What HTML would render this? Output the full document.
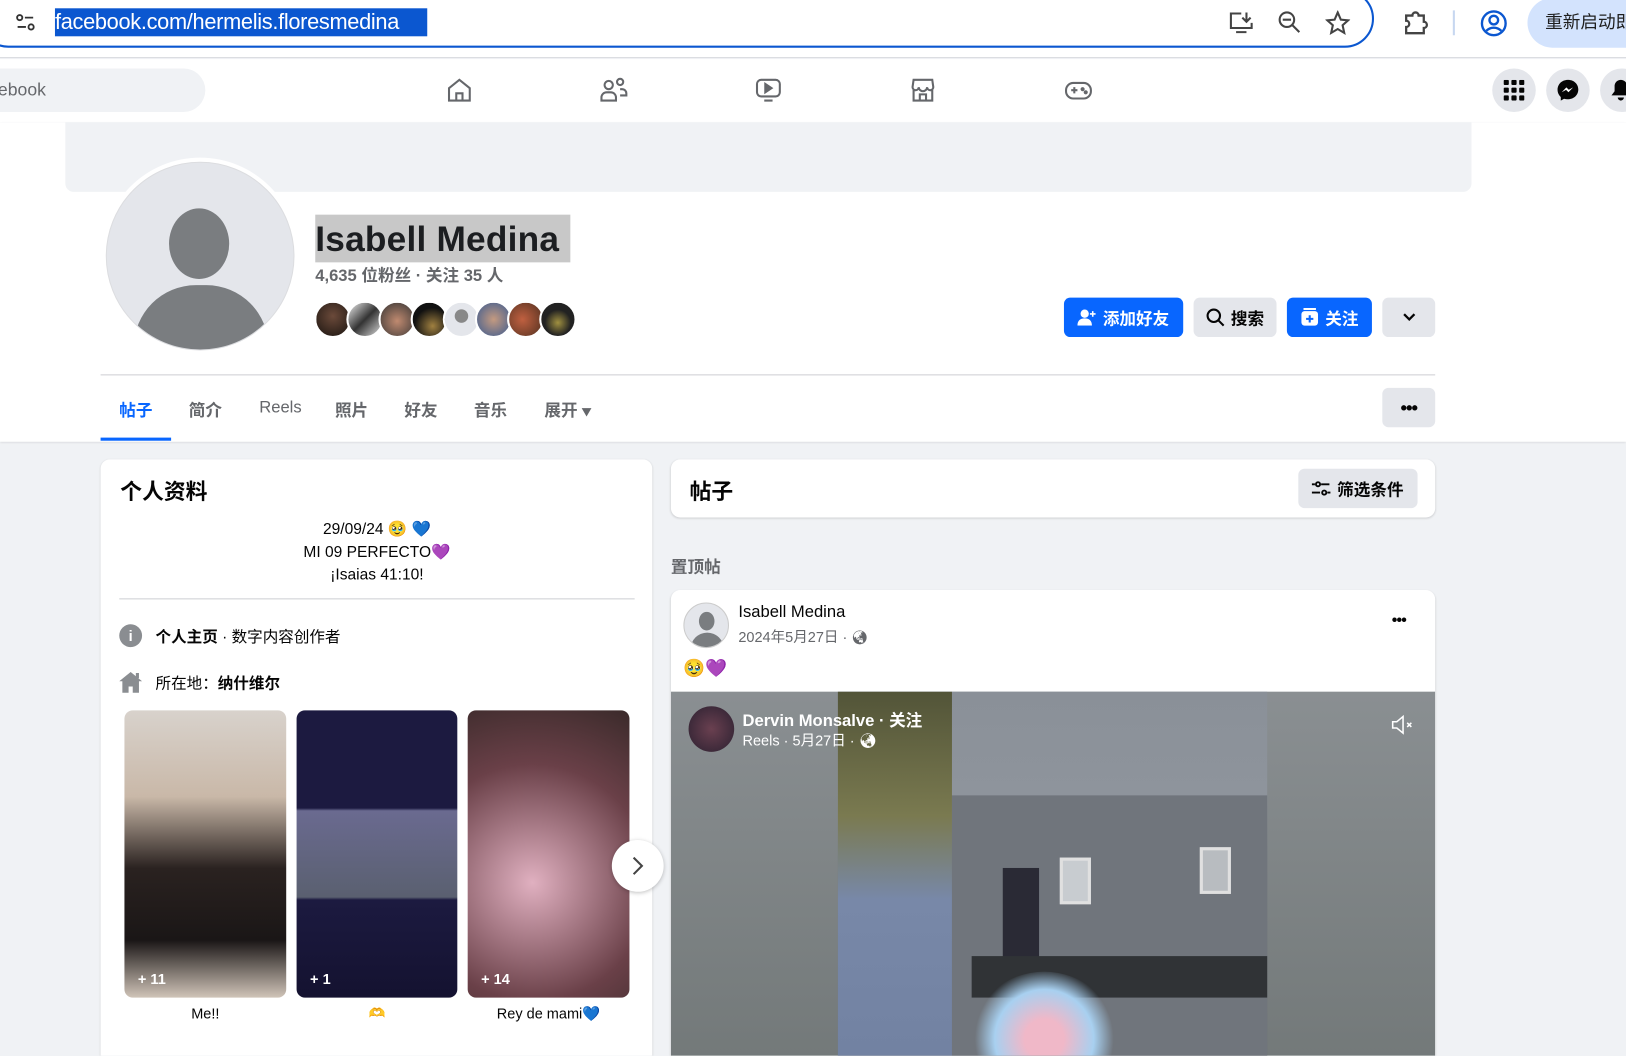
<!DOCTYPE html>
<html><head><meta charset="utf-8"><style>
*{box-sizing:border-box;margin:0;padding:0}
html,body{width:1626px;height:1056px;overflow:hidden;background:#f0f2f5}
body{font-family:"Liberation Sans","Noto Sans CJK SC",sans-serif;color:#050505}
#w{position:absolute;left:0;top:0;width:1568px;height:1018px;transform:scale(1.03699);transform-origin:0 0;overflow:hidden;background:#f0f2f5}
.a{position:absolute}
.c{border-radius:50%}
.btn{position:absolute;border-radius:6px;font-weight:bold;font-size:16px;display:flex;align-items:center;justify-content:center;gap:6px}
.tab{position:absolute;top:384px;height:20px;line-height:20px;font-size:16px;font-weight:bold;color:#65676b;font-family:"Noto Sans CJK SC","Liberation Sans",sans-serif}
.card{position:absolute;background:#fff;border-radius:9px;box-shadow:0 1px 2px rgba(0,0,0,.15)}
</style></head><body><div id="w">
<div class="a" style="left:0;top:0;width:1568px;height:56px;background:#fff;border-bottom:1px solid #dadce0"></div>
<div class="a" style="left:-20px;top:-10px;width:1345px;height:56px;border:2.5px solid #0b57d0;border-radius:28px;background:#fff"></div>
<svg class="a" style="left:14px;top:12px" width="22" height="20" viewBox="0 0 22 20" fill="none" stroke="#333" stroke-width="1.8"><circle cx="5" cy="5" r="2.5"/><path d="M10 5h8M3 14h8"/><circle cx="16" cy="14" r="2.5"/></svg>
<div class="a" style="left:53px;top:8px;width:359px;height:27px;background:#0b57d0;color:#fff;font-size:21px;line-height:27px;letter-spacing:-0.3px">facebook.com/hermelis.floresmedina</div>
<svg class="a" style="left:1185px;top:10px" width="26" height="24" viewBox="0 0 26 24" fill="none" stroke="#444" stroke-width="2"><path d="M12 3H2v14h20v-5M7 21h10M17 2v9M13 7l4 4 4-4"/></svg>
<svg class="a" style="left:1232px;top:10px" width="24" height="24" viewBox="0 0 24 24" fill="none" stroke="#444" stroke-width="2"><circle cx="9" cy="9" r="7"/><path d="M5 9h8M14 14l7 7"/></svg>
<svg class="a" style="left:1278px;top:10px" width="24" height="24" viewBox="0 0 24 24" fill="none" stroke="#444" stroke-width="2"><path d="M12 2l3 7 7 .6-5.3 4.7 1.6 7.4L12 18l-6.3 3.7 1.6-7.4L2 9.6 9 9z"/></svg>
<svg class="a" style="left:1352px;top:9px" width="26" height="26" viewBox="0 0 26 26" fill="none" stroke="#444" stroke-width="2.2"><path d="M4 6h6a3 3 0 016 0h5v6a3 3 0 010 6v5H4v-6a3 3 0 000-6z"/></svg>
<div class="a" style="left:1401px;top:10px;width:2px;height:24px;background:#c7d7f0"></div>
<svg class="a" style="left:1427px;top:9px" width="27" height="27" viewBox="0 0 26 26" fill="none" stroke="#0b57d0" stroke-width="2.2"><circle cx="13" cy="13" r="11"/><circle cx="13" cy="10" r="4"/><path d="M6 20c4-4 10-4 14 0"/></svg>
<div class="a" style="left:1473px;top:-2px;width:140px;height:48px;background:#d3e3fd;border-radius:24px;font-size:17px;line-height:48px;padding-left:17px;color:#1f1f1f">重新启动即</div>
<div class="a" style="left:0;top:57px;width:1568px;height:61px;background:#fff;box-shadow:0 2px 3px rgba(0,0,0,.08)"></div>
<div class="a" style="left:-40px;top:66px;width:238px;height:42px;background:#f0f2f5;border-radius:21px;font-size:17px;line-height:42px;padding-left:38px;color:#65676b">ebook</div>
<svg class="a" style="left:430px;top:74px" width="26" height="26" viewBox="0 0 26 26" fill="none" stroke="#65676b" stroke-width="2"><path d="M3 11L13 3l10 8v12H3zM10 23v-7h6v7"/></svg>
<svg class="a" style="left:578px;top:74px" width="28" height="26" viewBox="0 0 28 26" fill="none" stroke="#65676b" stroke-width="2"><circle cx="9" cy="8" r="4"/><path d="M2 23v-3a5 5 0 015-5h4a5 5 0 015 5v3z"/><circle cx="20" cy="5" r="3"/><path d="M20 12h2a4 4 0 014 4v2h-6"/></svg>
<svg class="a" style="left:728px;top:74px" width="26" height="26" viewBox="0 0 26 26" fill="none" stroke="#65676b" stroke-width="2"><rect x="2" y="3" width="22" height="16" rx="4"/><path d="M10 7v8l6-4z" fill="#65676b"/><path d="M9 23h8"/></svg>
<svg class="a" style="left:877px;top:74px" width="26" height="26" viewBox="0 0 26 26" fill="none" stroke="#65676b" stroke-width="2"><path d="M4 3h18l1 7a3 3 0 01-6 0 3 3 0 01-8 0 3 3 0 01-6 0zM4 12v11h18V12M10 23v-6h6v6"/></svg>
<svg class="a" style="left:1026px;top:76px" width="28" height="24" viewBox="0 0 28 24" fill="none" stroke="#65676b" stroke-width="2"><rect x="2" y="4" width="24" height="15" rx="7"/><path d="M7 11h6M10 8v6"/><circle cx="18" cy="10" r="1" fill="#65676b"/><circle cx="21" cy="13" r="1" fill="#65676b"/></svg>
<div class="a c" style="left:1439px;top:66px;width:42px;height:42px;background:#e4e6eb"></div>
<svg class="a" style="left:1450px;top:77px" width="20" height="20" viewBox="0 0 20 20" fill="#050505"><rect x="0" y="0" width="5" height="5" rx="1"/><rect x="7.5" y="0" width="5" height="5" rx="1"/><rect x="15" y="0" width="5" height="5" rx="1"/><rect x="0" y="7.5" width="5" height="5" rx="1"/><rect x="7.5" y="7.5" width="5" height="5" rx="1"/><rect x="15" y="7.5" width="5" height="5" rx="1"/><rect x="0" y="15" width="5" height="5" rx="1"/><rect x="7.5" y="15" width="5" height="5" rx="1"/><rect x="15" y="15" width="5" height="5" rx="1"/></svg>
<div class="a c" style="left:1491px;top:66px;width:42px;height:42px;background:#e4e6eb"></div>
<svg class="a" style="left:1501px;top:76px" width="22" height="22" viewBox="0 0 22 22"><path d="M11 1C5 1 1 5.3 1 10.6c0 2.8 1.2 5.2 3.1 6.9V21l3.2-1.8c1.1.3 2.4.5 3.7.5 6 0 10-4.3 10-9.4S17 1 11 1z" fill="#050505"/><path d="M5 13l4.5-4.8 2.3 2.3 4.2-2.3-4.5 4.8-2.3-2.3z" fill="#fff"/></svg>
<div class="a c" style="left:1543px;top:66px;width:42px;height:42px;background:#e4e6eb"></div>
<svg class="a" style="left:1553px;top:76px" width="20" height="22" viewBox="0 0 20 22" fill="#050505"><path d="M10 1a6 6 0 016 6v5l3 4H1l3-4V7a6 6 0 016-6zM7 18h6a3 3 0 01-6 0z"/></svg>
<div class="a" style="left:0;top:118px;width:1568px;height:308px;background:#fff;box-shadow:0 1px 2px rgba(0,0,0,.1)"></div>
<div class="a" style="left:63px;top:118px;width:1356px;height:67px;background:#f0f2f5;border-radius:0 0 8px 8px"></div>
<div class="a c" style="left:98px;top:152px;width:190px;height:190px;background:#fff"></div>
<div class="a c" style="left:102px;top:156px;width:182px;height:182px;background:#e4e6eb;overflow:hidden;border:1px solid #dcdde0">
 <div class="a" style="left:60px;top:44px;width:58px;height:68px;border-radius:50%;background:#7a7d80"></div>
 <div class="a" style="left:26px;top:118px;width:130px;height:100px;border-radius:60px 60px 0 0;background:#7a7d80"></div>
</div>
<div class="a" style="left:304px;top:207px;width:246px;height:46px;background:#c8c8c8"></div>
<div class="a" style="left:304px;top:212px;font-size:34px;font-weight:bold;color:#1c1e21;letter-spacing:0.2px">Isabell Medina</div>
<div class="a" style="left:304px;top:256px;font-size:16px;line-height:22px;font-weight:bold;color:#65676b">4,635 位粉丝 · 关注 35 人</div>
<div class="a" style="left:303px;top:290px;height:36px;width:260px">
 <div class="a c" style="left:0;top:0;width:36px;height:36px;background:radial-gradient(circle at 50% 40%,#6b4a3a,#1a1410);border:2px solid #fff"></div>
 <div class="a c" style="left:31px;top:0;width:36px;height:36px;background:linear-gradient(135deg,#eee,#333 50%,#ddd);border:2px solid #fff"></div>
 <div class="a c" style="left:62px;top:0;width:36px;height:36px;background:radial-gradient(circle at 50% 55%,#c08a70,#333);border:2px solid #fff"></div>
 <div class="a c" style="left:93px;top:0;width:36px;height:36px;background:radial-gradient(circle at 60% 70%,#a08040,#111 60%);border:2px solid #fff"></div>
 <div class="a c" style="left:124px;top:0;width:36px;height:36px;background:radial-gradient(circle at 50% 40%,#888 25%,#e4e6eb 27%);border:2px solid #fff"></div>
 <div class="a c" style="left:155px;top:0;width:36px;height:36px;background:radial-gradient(circle at 50% 50%,#c49a80,#3a5a90);border:2px solid #fff"></div>
 <div class="a c" style="left:186px;top:0;width:36px;height:36px;background:radial-gradient(circle at 40% 50%,#c06040,#503020);border:2px solid #fff"></div>
 <div class="a c" style="left:217px;top:0;width:36px;height:36px;background:radial-gradient(circle at 50% 60%,#a09040,#222 50%);border:2px solid #fff"></div>
</div>
<div class="btn" style="left:1026px;top:287px;width:115px;height:38px;background:#0866ff;color:#fff"><svg width="18" height="16" viewBox="0 0 18 16" fill="#fff"><circle cx="7" cy="4.5" r="4"/><path d="M0 16c0-5 3-7 7-7s7 2 7 7zM14 2h1.5v2h2v1.5h-2v2H14v-2h-2V4h2z"/></svg>添加好友</div>
<div class="btn" style="left:1151px;top:287px;width:80px;height:38px;background:#e4e6eb;color:#050505"><svg width="18" height="18" viewBox="0 0 18 18" fill="none" stroke="#050505" stroke-width="2"><circle cx="7.5" cy="7.5" r="6"/><path d="M12 12l5 5"/></svg>搜索</div>
<div class="btn" style="left:1241px;top:287px;width:82px;height:38px;background:#0866ff;color:#fff"><svg width="18" height="18" viewBox="0 0 18 18"><rect x="1" y="3" width="16" height="14" rx="3" fill="#fff"/><path d="M3 1h12" stroke="#fff" stroke-width="2"/><path d="M9 7v7M5.5 10.5h7" stroke="#0866ff" stroke-width="2"/></svg>关注</div>
<div class="btn" style="left:1333px;top:287px;width:51px;height:38px;background:#e4e6eb"><svg width="12" height="8" viewBox="0 0 12 8" fill="none" stroke="#050505" stroke-width="2.2"><path d="M1 1l5 5 5-5"/></svg></div>
<div class="a" style="left:97px;top:361px;width:1287px;height:1px;background:#ced0d4"></div>
<div class="tab" style="left:115px;color:#0866ff">帖子</div>
<div class="a" style="left:97px;top:422px;width:68px;height:3px;background:#0866ff"></div>
<div class="tab" style="left:182px">简介</div>
<div class="tab" style="left:250px;font-family:'Liberation Sans',sans-serif;font-weight:normal">Reels</div>
<div class="tab" style="left:323px">照片</div>
<div class="tab" style="left:390px">好友</div>
<div class="tab" style="left:457px">音乐</div>
<div class="tab" style="left:525px">展开 <span style="font-size:10px">▼</span></div>
<div class="btn" style="left:1333px;top:374px;width:51px;height:38px;background:#e4e6eb;font-size:18px;letter-spacing:-1px">•••</div>
<div class="card" style="left:97px;top:443px;width:532px;height:590px"></div>
<div class="a" style="left:116px;top:458px;font-size:21px;font-weight:bold">个人资料</div>
<div class="a" style="left:115px;top:500px;width:497px;text-align:center;font-size:15px;line-height:22px">29/09/24 <span style="color:#e88040">🥹</span> <span style="color:#4aa8ef">💙</span><br>MI 09 PERFECTO<span style="color:#8a3ce0">💜</span><br>¡Isaias 41:10!</div>
<div class="a" style="left:115px;top:577px;width:497px;height:1px;background:#ced0d4"></div>
<div class="a c" style="left:115px;top:602px;width:22px;height:22px;background:#8a8d91;color:#fff;font-size:14px;font-weight:bold;text-align:center;line-height:22px">i</div>
<div class="a" style="left:150px;top:603px;font-size:15px"><b>个人主页</b> · 数字内容创作者</div>
<svg class="a" style="left:115px;top:647px" width="22" height="22" viewBox="0 0 22 22" fill="#8a8d91"><path d="M11 1L0 10h3v11h6v-6h4v6h6V10h3z"/><rect x="16" y="2" width="3" height="5"/></svg>
<div class="a" style="left:150px;top:648px;font-size:15px">所在地：<b>纳什维尔</b></div>
<div class="a" style="left:120px;top:685px;width:156px;height:277px;border-radius:8px;background:linear-gradient(180deg,#d8d2cc 0%,#c9b8a8 30%,#2a2220 55%,#1a1616 80%,#d0c4b8 100%)"></div>
<div class="a" style="left:286px;top:685px;width:155px;height:277px;border-radius:8px;background:linear-gradient(180deg,#1c1a40 0%,#1c1a40 34%,#6a6a90 35%,#5a6070 65%,#1c1a40 66%,#141230 100%)"></div>
<div class="a" style="left:451px;top:685px;width:156px;height:277px;border-radius:8px;background:radial-gradient(circle at 40% 60%,#e0b0c0,#6a4048 60%,#3a2a2a)"></div>
<div class="a" style="left:133px;top:936px;color:#fff;font-size:14px;font-weight:bold">+ 11</div>
<div class="a" style="left:299px;top:936px;color:#fff;font-size:14px;font-weight:bold">+ 1</div>
<div class="a" style="left:464px;top:936px;color:#fff;font-size:14px;font-weight:bold">+ 14</div>
<div class="a" style="left:120px;top:969px;width:156px;text-align:center;font-size:14px">Me!!</div>
<div class="a" style="left:286px;top:969px;width:155px;text-align:center;font-size:13px;color:#e07070">🫶</div>
<div class="a" style="left:451px;top:969px;width:156px;text-align:center;font-size:14px">Rey de mami<span style="color:#4aa8ef">💙</span></div>
<div class="a c" style="left:590px;top:810px;width:50px;height:50px;background:#fff;box-shadow:0 1px 4px rgba(0,0,0,.25)"></div>
<svg class="a" style="left:609px;top:825px" width="12" height="20" viewBox="0 0 12 20" fill="none" stroke="#444" stroke-width="2"><path d="M2 2l8 8-8 8"/></svg>
<div class="card" style="left:647px;top:443px;width:737px;height:56px"></div>
<div class="a" style="left:665px;top:458px;font-size:21px;font-weight:bold">帖子</div>
<div class="btn" style="left:1252px;top:452px;width:115px;height:38px;background:#e4e6eb;font-size:16px"><svg width="18" height="14" viewBox="0 0 18 14" fill="none" stroke="#050505" stroke-width="1.8"><circle cx="6" cy="3" r="2"/><path d="M0 3h3M9 3h8M0 11h8M15 11h3"/><circle cx="12" cy="11" r="2"/></svg>筛选条件</div>
<div class="a" style="left:647px;top:533px;font-size:16px;font-weight:bold;color:#65676b">置顶帖</div>
<div class="card" style="left:647px;top:569px;width:737px;height:480px;overflow:hidden">
 <div class="a c" style="left:12px;top:12px;width:44px;height:44px;background:#e4e6eb;overflow:hidden;border:1px solid #ccc"><div class="a" style="left:14px;top:8px;width:15px;height:18px;border-radius:50%;background:#7a7d80"></div><div class="a" style="left:6px;top:28px;width:32px;height:20px;border-radius:16px 16px 0 0;background:#7a7d80"></div></div>
 <div class="a" style="left:65px;top:13px;font-size:16px">Isabell Medina</div>
 <div class="a" style="left:65px;top:35px;font-size:14px;color:#65676b">2024年5月27日 · <span style="font-size:13px">🌏︎</span></div>
 <div class="a" style="left:695px;top:21px;font-size:16px;letter-spacing:-1px;color:#050505">•••</div>
 <div class="a" style="left:12px;top:66px;font-size:17px"><span style="color:#f0b030">🥹</span><span style="color:#8a3ce0">💜</span></div>
 <div class="a" style="left:0;top:98px;width:737px;height:400px;background:linear-gradient(180deg,#8a8f92,#707676);overflow:hidden">
  <div class="a" style="left:161px;top:0;width:414px;height:400px;background:linear-gradient(180deg,#8a9098 0%,#8e949c 25%,#6f747a 40%,#6a6e74 100%)"></div>
  <div class="a" style="left:161px;top:0;width:110px;height:400px;background:linear-gradient(180deg,#525438,#7a7a50 30%,#7888a8 50%,#7080a0 100%)"></div>
  <div class="a" style="left:271px;top:100px;width:304px;height:300px;background:#70757c"></div>
  <div class="a" style="left:320px;top:170px;width:35px;height:90px;background:#2a2a35"></div>
  <div class="a" style="left:375px;top:160px;width:30px;height:45px;background:#c8ccd0;border:3px solid #e0e0e0"></div>
  <div class="a" style="left:510px;top:150px;width:30px;height:45px;background:#b8bcc0;border:3px solid #e0e0e0"></div>
  <div class="a" style="left:290px;top:255px;width:285px;height:40px;background:#303336"></div>
  <div class="a c" style="left:290px;top:270px;width:140px;height:130px;background:radial-gradient(circle,#f0b8c8 20%,#a8d0f0 50%,transparent 70%)"></div>
  <div class="a c" style="left:17px;top:14px;width:44px;height:44px;background:radial-gradient(circle,#6a4050,#2a2030)"></div>
  <div class="a" style="left:69px;top:14px;color:#fff;font-size:16px;font-weight:bold">Dervin Monsalve · 关注</div>
  <div class="a" style="left:69px;top:37px;color:#fff;font-size:14px">Reels · 5月27日 · 🌏︎</div>
  <svg class="a" style="left:694px;top:22px" width="24" height="20" viewBox="0 0 24 20" fill="none" stroke="#fff" stroke-width="1.5"><path d="M2 7h4l6-5v16l-6-5H2z"/><path d="M16 8l4 4M20 8l-4 4"/></svg>
 </div>
</div>
</div></body></html>
